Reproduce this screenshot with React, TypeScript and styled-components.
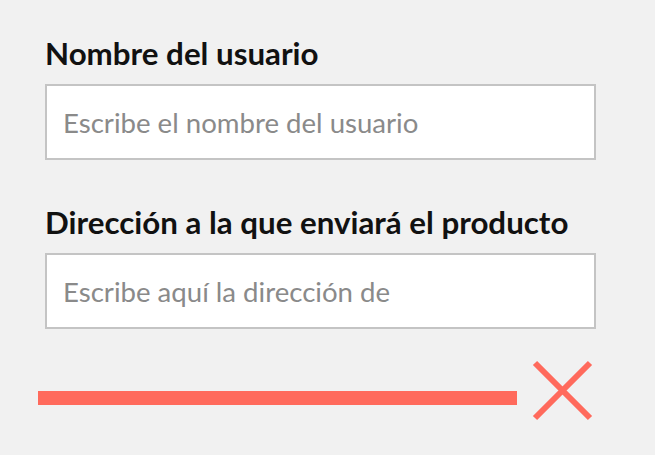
import React from 'react';
import styled, { createGlobalStyle } from 'styled-components';

const GlobalStyle = createGlobalStyle`
  html, body {
    margin: 0;
    padding: 0;
    background: #f1f1f1;
  }
  body {
    font-family: Lato, "Open Sans", sans-serif;
  }
`;

const Page = styled.div`
  width: 655px;
  height: 455px;
  padding-top: 34px;
  box-sizing: border-box;
`;

const Form = styled.form`
  display: flex;
  flex-direction: column;
  padding-left: 45px;
  width: 551px;
`;

const Field = styled.div<{ $gap?: number }>`
  display: flex;
  flex-direction: column;
  margin-top: ${(p) => p.$gap ?? 0}px;
`;

const Label = styled.label`
  font-size: 31.3px;
  line-height: 38px;
  font-weight: 700;
  color: #111;
  margin-bottom: 12px;
`;

const Input = styled.input`
  box-sizing: border-box;
  width: 100%;
  height: 76px;
  border: 2px solid #c4c4c4;
  background: #fff;
  padding: 0 16px;
  font-family: Lato, sans-serif;
  font-size: 27.6px;
  color: #333;
  outline: none;

  &::placeholder {
    color: #8a8a8a;
  }
`;

const Progress = styled.div`
  display: flex;
  align-items: flex-start;
  padding-left: 38px;
  margin-top: 31px;
`;

const Bar = styled.div`
  width: 479px;
  height: 14px;
  margin-top: 31px;
  background: #ff6a5c;
`;

const Close = styled.button`
  border: none;
  background: none;
  padding: 0;
  margin-left: 15px;
  width: 61px;
  height: 61px;
  cursor: pointer;
  display: flex;
`;

const App: React.FC = () => {
  return (
    <Page>
      <GlobalStyle />
      <Form>
        <Field>
          <Label htmlFor="nombre">Nombre del usuario</Label>
          <Input id="nombre" placeholder="Escribe el nombre del usuario" />
        </Field>
        <Field $gap={43}>
          <Label htmlFor="direccion">Dirección a la que enviará el producto</Label>
          <Input id="direccion" placeholder="Escribe aquí la dirección de" />
        </Field>
      </Form>
      <Progress>
        <Bar />
        <Close type="button" aria-label="Cerrar">
          <svg width="61" height="61" viewBox="0 0 61 61">
            <path d="M3 3 L58 58 M58 3 L3 58" stroke="#ff6a5c" strokeWidth="6" fill="none" />
          </svg>
        </Close>
      </Progress>
    </Page>
  );
};

export default App;
